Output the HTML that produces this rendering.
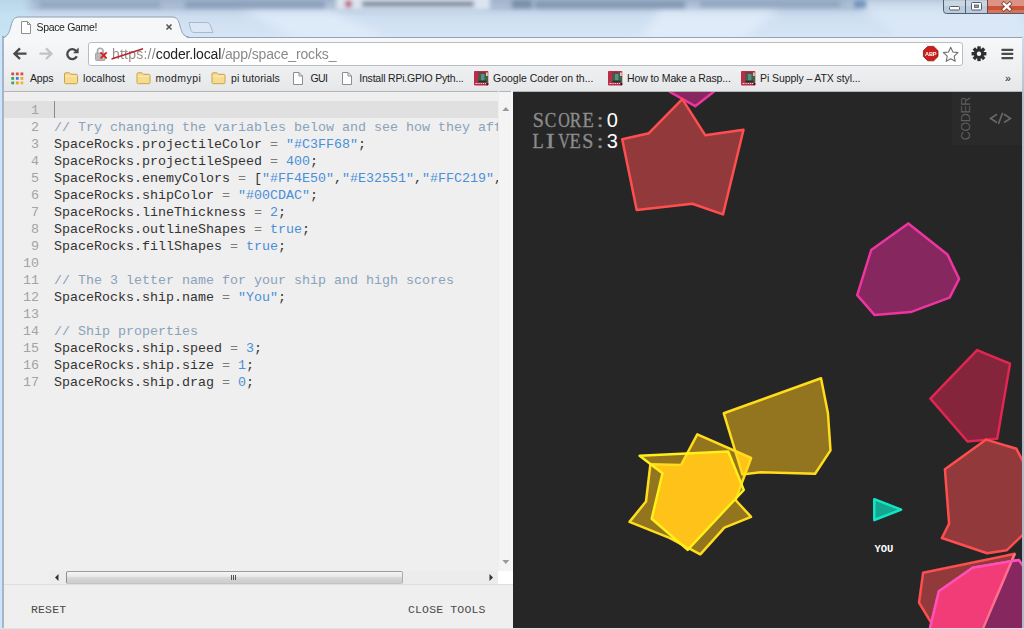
<!DOCTYPE html>
<html>
<head>
<meta charset="utf-8">
<title>Space Game!</title>
<style>
*{box-sizing:border-box;margin:0;padding:0}
html,body{width:1024px;height:629px;overflow:hidden;background:#cfdff0;font-family:"Liberation Sans",sans-serif}
#root{position:absolute;left:0;top:0;width:1024px;height:629px;overflow:hidden;filter:blur(0.4px)}
.abs{position:absolute}
/* ---------- window frame / glass ---------- */
#glass{left:0;top:0;width:1024px;height:92px;
  background:linear-gradient(180deg,#b4c6da 0px,#c3d3e6 8px,#cfdff1 18px,#d6e5f6 30px,#d8e6f6 40px)}
#glassblur{left:0;top:0;width:1024px;height:40px;overflow:hidden}
#lborder{left:0;top:36px;width:4px;height:593px;background:linear-gradient(90deg,#cbe5fc 0,#cbe5fc 1.8px,#a8b5c5 2.2px,#a8b5c5 3.6px,#e8eaec 4px)}
#rborder{left:1022px;top:36px;width:2px;height:593px;background:linear-gradient(180deg,#cfdceb,#b6c1cd 60px,#b0bbc8)}
#bborder{left:0;top:627.5px;width:1024px;height:1.5px;background:#dde3ea}
/* ---------- tab ---------- */
#tabsvg{left:0;top:14px}
#tabtitle{left:36.5px;top:20px;font-size:10.5px;line-height:14px;color:#222;white-space:nowrap;letter-spacing:-0.34px}
/* ---------- toolbar ---------- */
#toolbar{left:4px;top:37px;width:1018px;height:30px;background:linear-gradient(180deg,#f7f8fa,#eff0f2)}
#urlbox{left:88px;top:42px;width:875px;height:24px;background:#fff;border:1px solid #b9bcc1;border-radius:3px}
#url{left:112px;top:44px;font-size:14px;line-height:20px;white-space:nowrap;color:#222;letter-spacing:-0.08px}
#url .g{color:#8a8a8a}
#bookbar{left:4px;top:67px;width:1018px;height:25px;background:linear-gradient(180deg,#eff0f2,#e6e7e9);border-bottom:1px solid #b2b4b8}
.bm{position:absolute;top:71px;font-size:10.5px;line-height:14px;color:#222;white-space:nowrap}
/* ---------- editor ---------- */
#editor{left:4px;top:92px;width:509px;height:536px;background:#efefef}
#activeline{left:4px;top:101px;width:494px;height:17px;background:#e0e0e0}
#gutter{left:4px;top:102px;width:35px;text-align:right;font-family:"Liberation Mono",monospace;font-size:13.33px;line-height:17px;color:#a3a3a3}
#code{left:54px;top:102px;width:444px;overflow:hidden;font-family:"Liberation Mono",monospace;font-size:13.33px;line-height:17px;color:#333;white-space:pre}
#code .c{color:#8aa2ba}
#code .s{color:#4a8fd8}
#code .n{color:#4a8fd8}
#code .o{color:#7d7d7d}
#vscroll{left:498px;top:92px;width:15px;height:479px;background:#f4f4f4}
#hscroll{left:49px;top:571px;width:449px;height:13px;background:#ececec}
#corner{left:498px;top:571px;width:15px;height:13px;background:#fff}
#thumb{left:66px;top:571px;width:337px;height:12.5px;border:1px solid #9a9a9a;border-color:#9c9c9c #adadad #c4c4c4 #8f8f8f;border-radius:2px;background:linear-gradient(180deg,#f5f5f5 0%,#e9e9e9 40%,#d6d6d6 52%,#cdcdcd 100%)}
#botline{left:4px;top:584px;width:509px;height:1px;background:#dedede}
.btn{position:absolute;top:603px;font-family:"Liberation Mono",monospace;font-size:11.5px;line-height:14px;color:#4a4a4a;white-space:nowrap;letter-spacing:0.15px}
/* ---------- game ---------- */
#game{left:513px;top:92px;width:509px;height:537px;background:#262626;overflow:hidden}
.hud{position:absolute;left:19px;font-family:"Liberation Serif",serif;font-size:20px;line-height:22px;color:#8c8c8c;white-space:nowrap}
.hud i{display:inline-block;width:12.4px;text-align:center;font-style:normal;-webkit-text-stroke:0.35px #8c8c8c}
.hud b{font-family:"Liberation Sans",sans-serif;font-weight:normal;color:#fff;display:inline-block;width:12px;text-align:center}
#coderbox{left:439px;top:0;width:70px;height:53px;background:#2a2a2a}
#codertxt{left:446px;top:6px;width:12px;height:44px}
#you{left:361.5px;top:452px;font-family:"Liberation Mono",monospace;font-weight:bold;font-size:10.5px;line-height:10px;color:#fff;letter-spacing:-0.1px}
</style>
</head>
<body>
<div id="root">
  <div id="glass" class="abs"></div>
  <svg class="abs" style="left:0;top:0" width="1024" height="40" viewBox="0 0 1024 40">
    <defs>
      <filter id="bl" x="-5%" y="-50%" width="110%" height="200%"><feGaussianBlur stdDeviation="2.2"/></filter>
      <filter id="bl2" x="-5%" y="-50%" width="110%" height="200%"><feGaussianBlur stdDeviation="5"/></filter>
      <linearGradient id="gg" x1="0" y1="0" x2="0" y2="1">
        <stop offset="0" stop-color="#a2b5cd"/><stop offset=".2" stop-color="#acbfd6"/><stop offset=".3" stop-color="#c2d3e7"/><stop offset=".42" stop-color="#cedef1"/><stop offset="1" stop-color="#d8e6f6"/>
      </linearGradient>
    </defs>
    <rect x="0" y="0" width="1024" height="40" fill="url(#gg)"/>
    <g filter="url(#bl2)">
      <polygon points="240,10 330,10 390,40 300,40" fill="#e3eefa" opacity=".7"/>
      <polygon points="660,10 780,10 740,40 640,40" fill="#e6f0fb" opacity=".7"/>
      <polygon points="850,0 1024,0 1024,40 900,40" fill="#dbe8f6" opacity=".8"/>
      <rect x="-10" y="-5" width="40" height="50" fill="#c2e2f2" opacity=".8"/>
    </g>
    <g filter="url(#bl)">
      <rect x="336" y="-4" width="154" height="14" fill="#dbe4ef"/>
      <rect x="40" y="1" width="120" height="7" fill="#8fa4be" opacity=".8"/>
      <rect x="185" y="1" width="140" height="7" fill="#8499b5" opacity=".8"/>
      <rect x="362" y="1.5" width="112" height="5" fill="#6f7e93"/>
      <circle cx="348.5" cy="4" r="3.4" fill="#b33a55"/>
      <rect x="512" y="0" width="20" height="8" fill="#6f829c" opacity=".8"/>
      <rect x="535" y="1" width="150" height="7" fill="#7f93af" opacity=".9"/>
      <rect x="700" y="1" width="140" height="6" fill="#8ca1bc" opacity=".8"/>
      <rect x="854" y="0" width="12" height="8" fill="#5f86b3" opacity=".8"/>
    </g>
  </svg>
  <div id="lborder" class="abs"></div>
  <div id="rborder" class="abs"></div>
  <div id="toolbar" class="abs"></div>
  <div class="abs" style="left:4px;top:37px;width:1018px;height:1px;background:#93a2b6"></div>
  <!-- TAB -->
  <svg id="tabsvg" class="abs" width="260" height="24" viewBox="0 0 260 24">
    <path d="M4 24 C8 22 9 19 11 12 C12.5 6 14 3 19 3 L172 3 C177 3 178.5 6 180 12 C182 19 183 22 188 24 Z" fill="#f6f7f9"/>
    <path d="M3 23.5 C8 22 9 19 11 12 C12.5 6 14 3 19 3 L172 3 C177 3 178.5 6 180 12 C182 19 183 22 189 23" fill="none" stroke="#8f9db0" stroke-width="1"/>
    <path d="M189 8.5 L206 8.5 C209 8.5 210 10 211 13 L213 18.5 L194 18.5 C192 18.5 191 17 190.5 15 Z" fill="#dbe7f5" stroke="#a9b8ca" stroke-width="1"/>
  </svg>
  <div id="tabtitle" class="abs">Space Game!</div>
  <!-- TOOLBAR -->
  <div id="urlbox" class="abs"></div>
  <div id="url" class="abs"><span class="g" style="letter-spacing:0.22px;color:#9a8c8c">https</span><span class="g" style="letter-spacing:0.22px">://</span><span style="letter-spacing:-0.14px">coder.local<span class="g">/app/space_rocks_</span></span></div>
  <div id="bookbar" class="abs"></div>
  <div class="bm" style="left:30px;letter-spacing:-0.16px">Apps</div>
  <div class="bm" style="left:83px;letter-spacing:0.06px">localhost</div>
  <div class="bm" style="left:155.5px;letter-spacing:0.45px">modmypi</div>
  <div class="bm" style="left:231px;letter-spacing:0.09px">pi tutorials</div>
  <div class="bm" style="left:310.5px;letter-spacing:-0.65px">GUI</div>
  <div class="bm" style="left:359.25px;letter-spacing:-0.2px">Install RPi.GPIO Pyth...</div>
  <div class="bm" style="left:493px">Google Coder on th...</div>
  <div class="bm" style="left:627px;letter-spacing:-0.12px">How to Make a Rasp...</div>
  <div class="bm" style="left:760px;letter-spacing:-0.09px">Pi Supply – ATX styl...</div>
  <div class="bm" style="left:1005px">»</div>
  <!-- CHROME ICONS -->
  <svg id="icons" class="abs" style="left:0;top:0" width="1024" height="92" viewBox="0 0 1024 92">
    <!-- window controls -->
    <g>
      <path d="M943.5 0 V10.5 Q943.5 13.5 946.5 13.5 H1024 V0 Z" fill="#bccbdc" stroke="#4f5d70" stroke-width="1"/>
      <rect x="944" y="0" width="21" height="6" fill="#cfdbe8" opacity=".7"/>
      <rect x="966" y="0" width="21" height="6" fill="#cfdbe8" opacity=".7"/>
      <rect x="987.5" y="0" width="37" height="13" fill="#c9543c"/>
      <rect x="987.5" y="0" width="37" height="6" fill="#dd9384"/>
      <rect x="987.5" y="10" width="37" height="3" fill="#d8735a"/>
      <line x1="965.5" y1="0" x2="965.5" y2="13" stroke="#4f5d70"/>
      <line x1="987.5" y1="0" x2="987.5" y2="13" stroke="#7a4238"/>
      <rect x="949.5" y="6.5" width="10" height="3.5" rx="1" fill="#fff" stroke="#515c6b" stroke-width="1"/>
      <rect x="971.5" y="2.5" width="10" height="7.5" rx="1" fill="#fff" stroke="#515c6b" stroke-width="1"/>
      <rect x="974.5" y="5" width="4" height="2.5" fill="#8d9aaa" stroke="#515c6b" stroke-width=".8"/>
      <path d="M1003.8 3.6 L1009.8 9.3 M1009.8 3.6 L1003.8 9.3" stroke="#6b3229" stroke-width="3.8" stroke-linecap="square"/>
      <path d="M1003.8 3.6 L1009.8 9.3 M1009.8 3.6 L1003.8 9.3" stroke="#fff" stroke-width="2.4" stroke-linecap="square"/>
    </g>
    <!-- page icon in tab -->
    <path d="M21.5 21.5 H27.5 L30.5 24.5 V33.5 H21.5 Z" fill="#fff" stroke="#8e8e8e" stroke-width="1"/>
    <path d="M27.5 21.5 V24.5 H30.5" fill="none" stroke="#8e8e8e" stroke-width="1"/>
    <!-- tab close -->
    <path d="M166.5 24.5 L171.5 29.5 M171.5 24.5 L166.5 29.5" stroke="#555" stroke-width="1.6"/>
    <!-- back -->
    <path d="M14.5 53.7 H26.5 M20 48.4 L14.5 53.7 L20 59" fill="none" stroke="#484848" stroke-width="2.3" stroke-linejoin="miter"/>
    <!-- forward -->
    <path d="M39.5 53.7 H51.5 M46 48.4 L51.5 53.7 L46 59" fill="none" stroke="#c3c3c3" stroke-width="2.3"/>
    <!-- reload -->
    <path d="M76.2 51 A5 5 0 1 0 76.8 56.2" fill="none" stroke="#484848" stroke-width="2.3"/>
    <path d="M78.6 47.6 V53.2 H73 Z" fill="#484848"/>
    <!-- lock + red x -->
    <path d="M97.5 53 V50.5 A2.8 2.8 0 0 1 103 50.5 V53" fill="none" stroke="#a9a9a9" stroke-width="1.7"/>
    <rect x="95.5" y="53" width="9.5" height="7.5" rx="1" fill="#b9b9b9" stroke="#9a9a9a" stroke-width=".8"/>
    <path d="M100.5 52.3 L106.7 58.3 M106.7 52.3 L100.5 58.3" stroke="#d81f1f" stroke-width="1.7"/>
    <!-- strike -->
    <path d="M111.5 59 L143 48.7" stroke="#b3262e" stroke-width="1.5"/>
    <!-- ABP -->
    <polygon points="927.7,46.9 933.7,46.9 938,51.2 938,57 933.7,61.3 927.7,61.3 923.4,57 923.4,51.2" fill="#c9201c" stroke="#8e1411" stroke-width=".8" transform="translate(0,-0.5)"/>
    <text x="930.7" y="55.9" font-family="Liberation Sans, sans-serif" font-weight="bold" font-size="5.6" fill="#fff" text-anchor="middle" letter-spacing="-0.2">ABP</text>
    <!-- star -->
    <path d="M950.7 47.3 L952.9 52 L958 52.6 L954.2 56.2 L955.2 61.3 L950.7 58.8 L946.2 61.3 L947.2 56.2 L943.4 52.6 L948.5 52 Z" fill="#fdfdfd" stroke="#6f6f6f" stroke-width="1.1" stroke-linejoin="round"/>
    <!-- gear -->
    <g transform="translate(979,53.7)" fill="#2f2f2f">
      <circle r="5.1"/>
      <g id="tooth"><rect x="-1.7" y="-7.4" width="3.4" height="4" /></g>
      <g transform="rotate(45)"><rect x="-1.7" y="-7.4" width="3.4" height="4" /></g><g transform="rotate(90)"><rect x="-1.7" y="-7.4" width="3.4" height="4" /></g><g transform="rotate(135)"><rect x="-1.7" y="-7.4" width="3.4" height="4" /></g>
      <g transform="rotate(180)"><rect x="-1.7" y="-7.4" width="3.4" height="4" /></g><g transform="rotate(225)"><rect x="-1.7" y="-7.4" width="3.4" height="4" /></g><g transform="rotate(270)"><rect x="-1.7" y="-7.4" width="3.4" height="4" /></g><g transform="rotate(315)"><rect x="-1.7" y="-7.4" width="3.4" height="4" /></g>
      <circle r="2.2" fill="#f3f4f6"/>
    </g>
    <!-- menu -->
    <g fill="#4a4a4a"><rect x="1001.5" y="48.7" width="11.7" height="2.3" rx=".5"/><rect x="1001.5" y="52.8" width="11.7" height="2.3" rx=".5"/><rect x="1001.5" y="56.9" width="11.7" height="2.3" rx=".5"/></g>
    <!-- apps grid -->
    <g>
      <rect x="11.3" y="72.5" width="2.8" height="2.8" fill="#e04a3f"/><rect x="15.9" y="72.5" width="2.8" height="2.8" fill="#e2532f"/><rect x="20.5" y="72.5" width="2.8" height="2.8" fill="#e04a3f"/>
      <rect x="11.3" y="77" width="2.8" height="2.8" fill="#3aa757"/><rect x="15.9" y="77" width="2.8" height="2.8" fill="#3b7fe6"/><rect x="20.5" y="77" width="2.8" height="2.8" fill="#f5a623"/>
      <rect x="11.3" y="81.5" width="2.8" height="2.8" fill="#3aa757"/><rect x="15.9" y="81.5" width="2.8" height="2.8" fill="#f59a23"/><rect x="20.5" y="81.5" width="2.8" height="2.8" fill="#f7b529"/>
    </g>
    <!-- folders -->
    <g id="folder"><path d="M64.5 74 Q64.5 72.8 65.7 72.8 H69.5 L71 74.3 H76.3 Q77.5 74.3 77.5 75.5 V82.5 Q77.5 83.7 76.3 83.7 H65.7 Q64.5 83.7 64.5 82.5 Z" fill="#f7dc8f" stroke="#c9a24a" stroke-width="1"/><path d="M65.3 76.3 H76.7" stroke="#fbebb9" stroke-width="1"/></g>
    <g transform="translate(72.5,0)"><path d="M64.5 74 Q64.5 72.8 65.7 72.8 H69.5 L71 74.3 H76.3 Q77.5 74.3 77.5 75.5 V82.5 Q77.5 83.7 76.3 83.7 H65.7 Q64.5 83.7 64.5 82.5 Z" fill="#f7dc8f" stroke="#c9a24a" stroke-width="1"/><path d="M65.3 76.3 H76.7" stroke="#fbebb9" stroke-width="1"/></g>
    <g transform="translate(147.5,0)"><path d="M64.5 74 Q64.5 72.8 65.7 72.8 H69.5 L71 74.3 H76.3 Q77.5 74.3 77.5 75.5 V82.5 Q77.5 83.7 76.3 83.7 H65.7 Q64.5 83.7 64.5 82.5 Z" fill="#f7dc8f" stroke="#c9a24a" stroke-width="1"/><path d="M65.3 76.3 H76.7" stroke="#fbebb9" stroke-width="1"/></g>
    <!-- page bookmarks -->
    <g id="pg"><path d="M293.5 72.5 H299 L302.5 76 V84.5 H293.5 Z" fill="#fff" stroke="#8e8e8e" stroke-width="1"/><path d="M299 72.5 V76 H302.5" fill="none" stroke="#8e8e8e"/></g>
    <g transform="translate(49,0)"><path d="M293.5 72.5 H299 L302.5 76 V84.5 H293.5 Z" fill="#fff" stroke="#8e8e8e" stroke-width="1"/><path d="M299 72.5 V76 H302.5" fill="none" stroke="#8e8e8e"/></g>
    <!-- favicons (circuit board thumbnails) -->
    <g id="fav"><rect x="474" y="71" width="14.3" height="14.4" rx=".8" fill="#b92d49"/><rect x="478.3" y="72.6" width="9.6" height="9.8" fill="#3b6249"/><rect x="481" y="74" width="3.4" height="6.5" fill="#5b8f85"/><rect x="478.3" y="72" width="7" height="1.6" fill="#8a3040"/><rect x="486" y="72.5" width="1.8" height="3.5" fill="#f0c79a"/><rect x="478.5" y="80.6" width="8" height="1.6" fill="#1e3326"/><path d="M475.5 83.5 h2 m1 0 h1.2 m1 0 h1.2 m1 0 h1.2 m1 0 h1.2" stroke="#f3d7dc" stroke-width="1.2"/><rect x="486.5" y="83" width="1.8" height="2.2" fill="#2a1a20"/></g>
    <g transform="translate(134,0)"><rect x="474" y="71" width="14.3" height="14.4" rx=".8" fill="#b92d49"/><rect x="478.3" y="72.6" width="9.6" height="9.8" fill="#3b6249"/><rect x="481" y="74" width="3.4" height="6.5" fill="#5b8f85"/><rect x="478.3" y="72" width="7" height="1.6" fill="#8a3040"/><rect x="486" y="72.5" width="1.8" height="3.5" fill="#f0c79a"/><rect x="478.5" y="80.6" width="8" height="1.6" fill="#1e3326"/><path d="M475.5 83.5 h2 m1 0 h1.2 m1 0 h1.2 m1 0 h1.2 m1 0 h1.2" stroke="#f3d7dc" stroke-width="1.2"/><rect x="486.5" y="83" width="1.8" height="2.2" fill="#2a1a20"/></g>
    <g transform="translate(267,0)"><rect x="474" y="71" width="14.3" height="14.4" rx=".8" fill="#b92d49"/><rect x="478.3" y="72.6" width="9.6" height="9.8" fill="#3b6249"/><rect x="481" y="74" width="3.4" height="6.5" fill="#5b8f85"/><rect x="478.3" y="72" width="7" height="1.6" fill="#8a3040"/><rect x="486" y="72.5" width="1.8" height="3.5" fill="#f0c79a"/><rect x="478.5" y="80.6" width="8" height="1.6" fill="#1e3326"/><path d="M475.5 83.5 h2 m1 0 h1.2 m1 0 h1.2 m1 0 h1.2 m1 0 h1.2" stroke="#f3d7dc" stroke-width="1.2"/><rect x="486.5" y="83" width="1.8" height="2.2" fill="#2a1a20"/></g>
  </svg>
  <!-- EDITOR -->
  <div id="editor" class="abs"></div>
  <div id="activeline" class="abs"></div>
  <div id="gutter" class="abs">1<br>2<br>3<br>4<br>5<br>6<br>7<br>8<br>9<br>10<br>11<br>12<br>13<br>14<br>15<br>16<br>17</div>
<div id="code" class="abs">
<span class="c">// Try changing the variables below and see how they affect</span>
SpaceRocks.projectileColor <span class="o">=</span> <span class="s">"#C3FF68"</span>;
SpaceRocks.projectileSpeed <span class="o">=</span> <span class="n">400</span>;
SpaceRocks.enemyColors <span class="o">=</span> [<span class="s">"#FF4E50"</span>,<span class="s">"#E32551"</span>,<span class="s">"#FFC219"</span>,
SpaceRocks.shipColor <span class="o">=</span> <span class="s">"#00CDAC"</span>;
SpaceRocks.lineThickness <span class="o">=</span> <span class="n">2</span>;
SpaceRocks.outlineShapes <span class="o">=</span> <span class="n">true</span>;
SpaceRocks.fillShapes <span class="o">=</span> <span class="n">true</span>;

<span class="c">// The 3 letter name for your ship and high scores</span>
SpaceRocks.ship.name <span class="o">=</span> <span class="s">"You"</span>;

<span class="c">// Ship properties</span>
SpaceRocks.ship.speed <span class="o">=</span> <span class="n">3</span>;
SpaceRocks.ship.size <span class="o">=</span> <span class="n">1</span>;
SpaceRocks.ship.drag <span class="o">=</span> <span class="n">0</span>;</div>
  <div class="abs" style="left:53.5px;top:101px;width:1px;height:17px;background:#8a8a8a"></div>
  <div id="vscroll" class="abs"></div>
  <svg class="abs" style="left:498px;top:91px" width="15" height="494" viewBox="498 91 15 494">
    <rect x="498" y="91" width="1" height="480" fill="#ededed"/>
    <rect x="511" y="91" width="2" height="494" fill="#f8f8f8"/>
    <path d="M502.3 111 L505.8 107 L509.3 111 Z" fill="#9a9a9a"/>
    <path d="M502.3 560 L509.3 560 L505.8 564 Z" fill="#9a9a9a"/>
  </svg>
  <div id="hscroll" class="abs"></div>
  <div id="thumb" class="abs"></div>
  <div id="corner" class="abs"></div>
  <svg class="abs" style="left:49px;top:571px" width="449" height="13" viewBox="49 571 449 13">
    <path d="M58.5 574 L55 577.5 L58.5 581 Z" fill="#333"/>
    <path d="M489.5 574 L493 577.5 L489.5 581 Z" fill="#333"/>
    <g stroke="#555" stroke-width="1"><path d="M231.5 575 V580 M233.5 575 V580 M235.5 575 V580"/></g>
  </svg>
  <div id="botline" class="abs"></div>
  <div class="btn" style="left:31px">RESET</div>
  <div class="btn" style="left:408px">CLOSE TOOLS</div>
  <!-- GAME -->
  <div id="game" class="abs">
    <svg class="abs" style="left:0;top:0" width="509" height="537" viewBox="513 92 509 537">
      <g stroke-width="2.5" stroke-linejoin="round">
      <!-- top magenta -->
      <polygon points="662,80 670,92 695.2,106.2 713.5,92 722,80" fill="#862760" stroke="#ee359f"/>
      <!-- red crown -->
      <polygon points="682.3,99.1 705.2,135.2 743.5,129.8 723,214.4 692.3,203.7 636.7,209.9 622.2,139.2 648.9,133.2" fill="#923a3b" stroke="#ff4e50"/>
      <!-- magenta heptagon -->
      <polygon points="908.3,223.4 947.4,254.4 959.1,278.9 949.6,297.6 910.6,312.1 874.7,315.1 857.2,295.1 871.2,250" fill="#862760" stroke="#ee359f"/>
      <!-- crimson -->
      <polygon points="977.1,350.1 1010,363.6 997.2,438.8 967.5,441.5 930.4,398.6" fill="#84253b" stroke="#e32551"/>
      <!-- red right -->
      <polygon points="986.2,439.6 1016.4,448.8 1030,475 1030,528 1006.6,550.3 987.1,553.3 941.9,538 949.1,523.6 944.9,469.2" fill="#923a3b" stroke="#ff4e50"/>
      <!-- bottom red -->
      <polygon points="1014.8,553.8 923.1,572.8 919,602.6 935,629 945,640 975,640" fill="#923a3b" stroke="#ff4e50"/>
      <!-- bottom pink: purple where alone -->
      <polygon points="1018.9,559.9 972.7,567.7 938.9,591.3 926,645 1040,645 1040,590" fill="#862760" stroke="#ff4fb8"/>
      <!-- overlap of pink and bottom red = bright pink -->
      <polygon points="1012.5,561 972.7,567.7 938.9,591.3 929.6,629 981,629" fill="#f23c78" stroke="none"/>
      <polyline points="1014.8,553.8 978,640" fill="none" stroke="#ff6f8e"/>
      <polyline points="1018.9,559.9 972.7,567.7 938.9,591.3 926,645" fill="none" stroke="#ff4fb8"/>
      <!-- yellow group -->
      <defs>
        <clipPath id="cpB"><polygon points="639.6,455.7 728.2,451.5 743.8,490 687.7,549.9 651.7,518.7 662.5,473.2"/></clipPath>
        <clipPath id="cpY"><polygon points="723.8,413.3 821,378.2 827.9,412.9 830.5,450.4 815.1,473.8 760.7,472.3 742.4,474.5"/></clipPath>
      </defs>
      <polygon points="723.8,413.3 821,378.2 827.9,412.9 830.5,450.4 815.1,473.8 760.7,472.3 742.4,474.5" fill="#93741f" stroke="none"/>
      <polygon points="697.3,434.4 751.1,458 735.5,500 751.1,516.8 724.4,527.6 700.3,554.3 669.5,537.8 629.5,521.9 646,501.5 650.4,464.2 681,465" fill="#93741f" stroke="none"/>
      <polygon points="639.6,455.7 728.2,451.5 743.8,490 687.7,549.9 651.7,518.7 662.5,473.2" fill="#93741f" stroke="none"/>
      <polygon points="697.3,434.4 751.1,458 735.5,500 751.1,516.8 724.4,527.6 700.3,554.3 669.5,537.8 629.5,521.9 646,501.5 650.4,464.2 681,465" fill="#ffc219" stroke="none" clip-path="url(#cpB)"/>
      <polygon points="697.3,434.4 751.1,458 735.5,500 751.1,516.8 724.4,527.6 700.3,554.3 669.5,537.8 629.5,521.9 646,501.5 650.4,464.2 681,465" fill="#ffc219" stroke="none" clip-path="url(#cpY)"/>
      <polygon points="639.6,455.7 728.2,451.5 743.8,490 687.7,549.9 651.7,518.7 662.5,473.2" fill="#ffc219" stroke="none" clip-path="url(#cpY)"/>
      <polygon points="723.8,413.3 821,378.2 827.9,412.9 830.5,450.4 815.1,473.8 760.7,472.3 742.4,474.5" fill="none" stroke="#ffdd1a"/>
      <polygon points="697.3,434.4 751.1,458 735.5,500 751.1,516.8 724.4,527.6 700.3,554.3 669.5,537.8 629.5,521.9 646,501.5 650.4,464.2 681,465" fill="none" stroke="#ffdd1a"/>
      <polygon points="639.6,455.7 728.2,451.5 743.8,490 687.7,549.9 651.7,518.7 662.5,473.2" fill="none" stroke="#fff01a"/>
      <!-- ship -->
      <polygon points="874.3,499.2 901.2,509.6 874.3,520" fill="#14a790" stroke="#12e6c6"/>
      </g>
    </svg>
    <div class="hud" style="top:16.5px"><i style="transform:scaleX(1.0)">S</i><i style="transform:scaleX(0.86)">C</i><i style="transform:scaleX(0.8)">O</i><i style="transform:scaleX(0.86)">R</i><i style="transform:scaleX(0.92)">E</i><i style="transform:scaleX(1.2)">:</i><b>0</b></div>
    <div class="hud" style="top:38.3px"><i style="transform:scaleX(0.92)">L</i><i style="transform:scaleX(1.35)">I</i><i style="transform:scaleX(0.8)">V</i><i style="transform:scaleX(0.92)">E</i><i style="transform:scaleX(1.0)">S</i><i style="transform:scaleX(1.2)">:</i><b>3</b></div>
    <div id="coderbox" class="abs"></div>
    <svg class="abs" style="left:437px;top:0" width="72" height="56" viewBox="950 92 72 56">
      <text transform="translate(969.9,118.6) rotate(-90)" text-anchor="middle" font-family="Liberation Sans, sans-serif" font-size="12.5" letter-spacing="-0.4" fill="#5e5e5e">CODER</text>
      <path d="M997 114.3 L990.6 118.4 L997 122.5 M1002.7 112.8 L998.4 124 M1004 114.3 L1010.4 118.4 L1004 122.5" fill="none" stroke="#686868" stroke-width="1.7" stroke-linejoin="miter"/>
    </svg>
    <div id="you" class="abs">YOU</div>
  </div>
  <div id="bborder" class="abs"></div>
</div>
</body>
</html>
